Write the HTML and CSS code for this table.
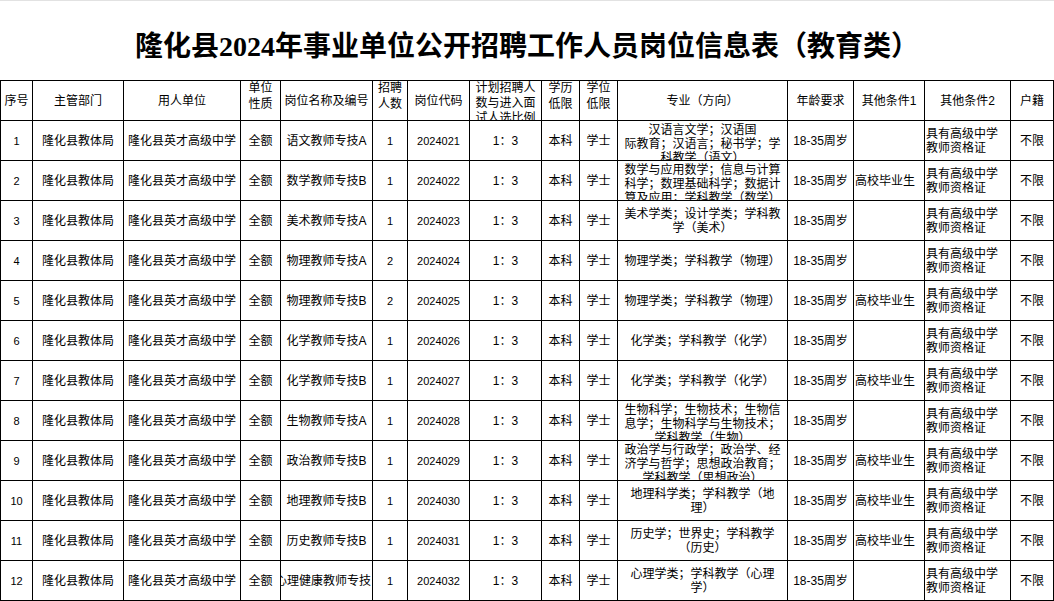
FILE: index.html
```html
<!DOCTYPE html>
<html lang="zh-CN">
<head>
<meta charset="utf-8">
<title>隆化县2024年事业单位公开招聘工作人员岗位信息表（教育类）</title>
<link rel="stylesheet" href="styles.css">
</head>
<body>
<div class="title">隆化县2024年事业单位公开招聘工作人员岗位信息表（教育类）</div>
<div class="tbl">
  <div class="c h">序号</div>
  <div class="c h">主管部门</div>
  <div class="c h">用人单位</div>
  <div class="c h h2"><span>单位<br>性质</span></div>
  <div class="c h">岗位名称及编号</div>
  <div class="c h h2"><span>招聘<br>人数</span></div>
  <div class="c h">岗位代码</div>
  <div class="c h h3"><span>计划招聘人<br>数与进入面<br>试人选比例</span></div>
  <div class="c h h2"><span>学历<br>低限</span></div>
  <div class="c h h2"><span>学位<br>低限</span></div>
  <div class="c h">专业（方向）</div>
  <div class="c h">年龄要求</div>
  <div class="c h">其他条件1</div>
  <div class="c h">其他条件2</div>
  <div class="c h">户籍</div>

  <div class="c num">1</div><div class="c">隆化县教体局</div><div class="c">隆化县英才高级中学</div><div class="c">全额</div><div class="c">语文教师专技A</div><div class="c num">1</div><div class="c num">2024021</div><div class="c">1：3</div><div class="c">本科</div><div class="c">学士</div>
  <div class="c top"><span>汉语言文学；汉语国<br>际教育；汉语言；秘书学；学<br>科教学（语文）</span></div>
  <div class="c">18-35周岁</div><div class="c l"></div><div class="c l"><span>具有高级中学<br>教师资格证</span></div><div class="c">不限</div>

  <div class="c num">2</div><div class="c">隆化县教体局</div><div class="c">隆化县英才高级中学</div><div class="c">全额</div><div class="c">数学教师专技B</div><div class="c num">1</div><div class="c num">2024022</div><div class="c">1：3</div><div class="c">本科</div><div class="c">学士</div>
  <div class="c top"><span>数学与应用数学；信息与计算<br>科学；数理基础科学；数据计<br>算及应用；学科教学（数学）</span></div>
  <div class="c">18-35周岁</div><div class="c l">高校毕业生</div><div class="c l"><span>具有高级中学<br>教师资格证</span></div><div class="c">不限</div>

  <div class="c num">3</div><div class="c">隆化县教体局</div><div class="c">隆化县英才高级中学</div><div class="c">全额</div><div class="c">美术教师专技A</div><div class="c num">1</div><div class="c num">2024023</div><div class="c">1：3</div><div class="c">本科</div><div class="c">学士</div>
  <div class="c"><span>美术学类；设计学类；学科教<br>学（美术）</span></div>
  <div class="c">18-35周岁</div><div class="c l"></div><div class="c l"><span>具有高级中学<br>教师资格证</span></div><div class="c">不限</div>

  <div class="c num">4</div><div class="c">隆化县教体局</div><div class="c">隆化县英才高级中学</div><div class="c">全额</div><div class="c">物理教师专技A</div><div class="c num">2</div><div class="c num">2024024</div><div class="c">1：3</div><div class="c">本科</div><div class="c">学士</div>
  <div class="c">物理学类；学科教学（物理）</div>
  <div class="c">18-35周岁</div><div class="c l"></div><div class="c l"><span>具有高级中学<br>教师资格证</span></div><div class="c">不限</div>

  <div class="c num">5</div><div class="c">隆化县教体局</div><div class="c">隆化县英才高级中学</div><div class="c">全额</div><div class="c">物理教师专技B</div><div class="c num">2</div><div class="c num">2024025</div><div class="c">1：3</div><div class="c">本科</div><div class="c">学士</div>
  <div class="c">物理学类；学科教学（物理）</div>
  <div class="c">18-35周岁</div><div class="c l">高校毕业生</div><div class="c l"><span>具有高级中学<br>教师资格证</span></div><div class="c">不限</div>

  <div class="c num">6</div><div class="c">隆化县教体局</div><div class="c">隆化县英才高级中学</div><div class="c">全额</div><div class="c">化学教师专技A</div><div class="c num">1</div><div class="c num">2024026</div><div class="c">1：3</div><div class="c">本科</div><div class="c">学士</div>
  <div class="c">化学类；学科教学（化学）</div>
  <div class="c">18-35周岁</div><div class="c l"></div><div class="c l"><span>具有高级中学<br>教师资格证</span></div><div class="c">不限</div>

  <div class="c num">7</div><div class="c">隆化县教体局</div><div class="c">隆化县英才高级中学</div><div class="c">全额</div><div class="c">化学教师专技B</div><div class="c num">1</div><div class="c num">2024027</div><div class="c">1：3</div><div class="c">本科</div><div class="c">学士</div>
  <div class="c">化学类；学科教学（化学）</div>
  <div class="c">18-35周岁</div><div class="c l">高校毕业生</div><div class="c l"><span>具有高级中学<br>教师资格证</span></div><div class="c">不限</div>

  <div class="c num">8</div><div class="c">隆化县教体局</div><div class="c">隆化县英才高级中学</div><div class="c">全额</div><div class="c">生物教师专技A</div><div class="c num">1</div><div class="c num">2024028</div><div class="c">1：3</div><div class="c">本科</div><div class="c">学士</div>
  <div class="c top"><span>生物科学；生物技术；生物信<br>息学；生物科学与生物技术；<br>学科教学（生物）</span></div>
  <div class="c">18-35周岁</div><div class="c l"></div><div class="c l"><span>具有高级中学<br>教师资格证</span></div><div class="c">不限</div>

  <div class="c num">9</div><div class="c">隆化县教体局</div><div class="c">隆化县英才高级中学</div><div class="c">全额</div><div class="c">政治教师专技B</div><div class="c num">1</div><div class="c num">2024029</div><div class="c">1：3</div><div class="c">本科</div><div class="c">学士</div>
  <div class="c top"><span>政治学与行政学；政治学、经<br>济学与哲学；思想政治教育；<br>学科教学（思想政治）</span></div>
  <div class="c">18-35周岁</div><div class="c l">高校毕业生</div><div class="c l"><span>具有高级中学<br>教师资格证</span></div><div class="c">不限</div>

  <div class="c num">10</div><div class="c">隆化县教体局</div><div class="c">隆化县英才高级中学</div><div class="c">全额</div><div class="c">地理教师专技B</div><div class="c num">1</div><div class="c num">2024030</div><div class="c">1：3</div><div class="c">本科</div><div class="c">学士</div>
  <div class="c"><span>地理科学类；学科教学（地<br>理）</span></div>
  <div class="c">18-35周岁</div><div class="c l">高校毕业生</div><div class="c l"><span>具有高级中学<br>教师资格证</span></div><div class="c">不限</div>

  <div class="c num">11</div><div class="c">隆化县教体局</div><div class="c">隆化县英才高级中学</div><div class="c">全额</div><div class="c">历史教师专技B</div><div class="c num">1</div><div class="c num">2024031</div><div class="c">1：3</div><div class="c">本科</div><div class="c">学士</div>
  <div class="c"><span>历史学；世界史；学科教学<br>（历史）</span></div>
  <div class="c">18-35周岁</div><div class="c l">高校毕业生</div><div class="c l"><span>具有高级中学<br>教师资格证</span></div><div class="c">不限</div>

  <div class="c num">12</div><div class="c">隆化县教体局</div><div class="c">隆化县英才高级中学</div><div class="c">全额</div><div class="c rt">心理健康教师专技</div><div class="c num">1</div><div class="c num">2024032</div><div class="c">1：3</div><div class="c">本科</div><div class="c">学士</div>
  <div class="c"><span>心理学类；学科教学（心理<br>学）</span></div>
  <div class="c">18-35周岁</div><div class="c l"></div><div class="c l"><span>具有高级中学<br>教师资格证</span></div><div class="c">不限</div>
</div>
</body>
</html>
```

FILE: styles.css
```css
html, body {
  margin: 0;
  padding: 0;
  background: #ffffff;
  color: #000000;
}

body {
  width: 1054px;
  height: 601px;
  overflow: hidden;
  font-family: "Liberation Sans", "Noto Sans CJK SC", sans-serif;
}

.title {
  box-sizing: border-box;
  height: 80px;
  padding-top: 6px;
  border-top: 1px solid #e2e2e2;
  display: flex;
  align-items: center;
  justify-content: center;
  font-family: "Liberation Serif", "Noto Sans CJK SC", serif;
  font-weight: 700;
  font-size: 28px;
  white-space: nowrap;
}

.tbl {
  box-sizing: border-box;
  width: 1054px;
  display: grid;
  grid-template-columns: 32px 91px 117px 40px 92px 35px 62px 72px 38px 38px 170px 66px 71px 86px 43px;
  grid-auto-rows: 40px;
  border-left: 1px solid #000;
  border-top: 1px solid #000;
}

.c {
  box-sizing: border-box;
  border-right: 1px solid #000;
  border-bottom: 1px solid #000;
  display: flex;
  align-items: center;
  justify-content: center;
  text-align: center;
  overflow: hidden;
  white-space: nowrap;
  font-size: 12px;
  line-height: 14px;
}

.h {
  line-height: 16px;
}

.h2 {
  padding-bottom: 9px;
}

.h3 {
  align-items: flex-start;
  line-height: 15px;
  padding-top: 0;
}

.top {
  align-items: flex-start;
  padding-top: 2px;
}

.l {
  justify-content: flex-start;
  text-align: left;
  padding-left: 1px;
}

.rt {
  justify-content: flex-end;
  padding-right: 1px;
}

.num {
  font-size: 11px;
}
```
